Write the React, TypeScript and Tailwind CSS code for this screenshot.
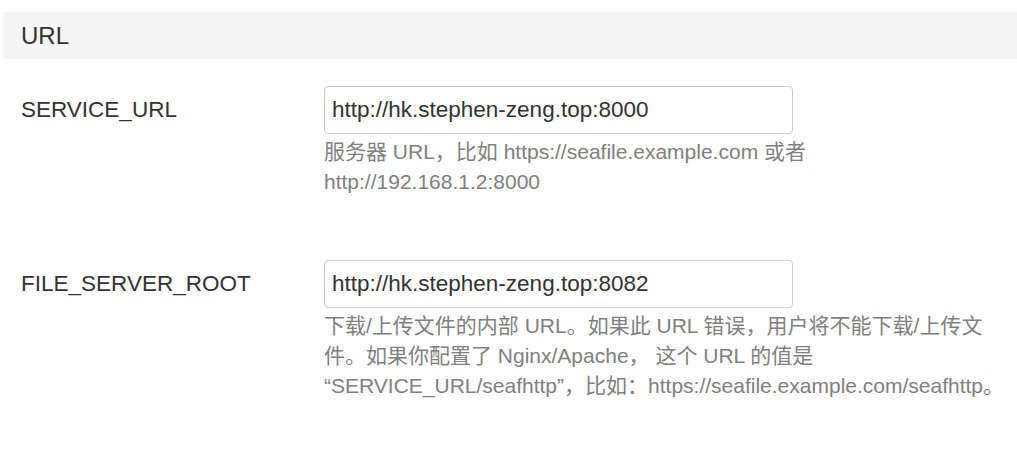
const font = { fontFamily: '"Liberation Sans", Arial, "Noto Sans CJK SC", sans-serif' };

const fields = [
  {
    name: 'SERVICE_URL',
    value: 'http://hk.stephen-zeng.top:8000',
    help: '服务器 URL，比如 https://seafile.example.com 或者 http://192.168.1.2:8000',
  },
  {
    name: 'FILE_SERVER_ROOT',
    value: 'http://hk.stephen-zeng.top:8082',
    help: '下载/上传文件的内部 URL。如果此 URL 错误，用户将不能下载/上传文件。如果你配置了 Nginx/Apache， 这个 URL 的值是 “SERVICE_URL/seafhttp”，比如：https://seafile.example.com/seafhttp。',
  },
];

export default function App() {
  return (
    <div className="w-[1017px] h-[449px] bg-white overflow-hidden pt-3 pl-[3px]" style={font}>
      {/* Section header */}
      <h3 className="h-[47px] bg-[#f5f5f5] rounded-l-[3px] pl-[18px] flex items-center text-[24px] font-normal text-[#333]">
        URL
      </h3>

      <div className="flex flex-col gap-[63px] mt-[27px]">
        {fields.map((field) => (
          <div key={field.name} className="flex items-start">
            <label className="w-[321px] pl-[18px] leading-[48px] text-[22.5px] text-[#333]">
              {field.name}
            </label>
            <div className="flex flex-col">
              <input
                readOnly
                value={field.value}
                className="w-[469px] h-[48px] border border-[#ccc] rounded-[4px] px-[7px] text-[22.5px] text-[#333] outline-none"
                style={font}
              />
              <p className="w-[682px] mt-[3px] text-[21px] leading-[30px] text-[#808080]">
                {field.help}
              </p>
            </div>
          </div>
        ))}
      </div>
    </div>
  );
}
